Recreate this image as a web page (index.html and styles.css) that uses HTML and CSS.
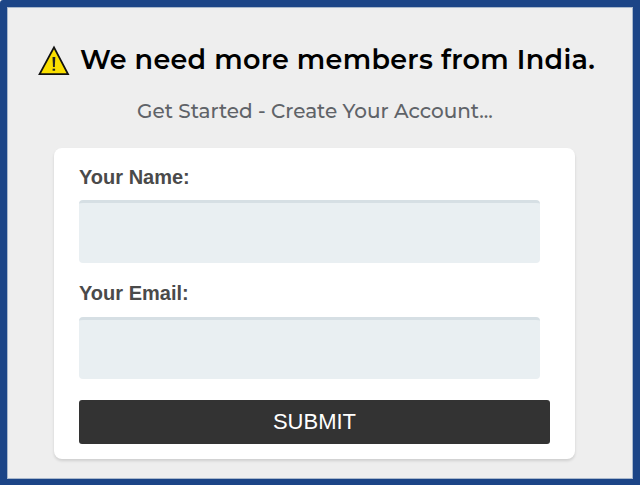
FILE: index.html
```html
<!DOCTYPE html>
<html lang="en">
<head>
  <meta charset="UTF-8" />
  <meta name="viewport" content="width=device-width, initial-scale=1" />
  <title>Create Your Account</title>
  <link rel="stylesheet" href="styles.css">
</head>
<body>

<main class="signup">
  <header class="signup-title">
    <svg class="warning-icon" viewBox="0 0 32 31" aria-hidden="true">
      <path d="M16 2.3 L30 29.1 H1.6 Z" fill="#fadf00" stroke="#111" stroke-width="1.8" />
      <path d="M14.5 12 H17.3 L16.8 22 H15 Z" fill="#222" />
      <rect x="14.6" y="23.7" width="2.5" height="2" fill="#222" />
    </svg>
    <h1>We need more members from India.</h1>
  </header>
  <p class="subtitle">Get Started - Create Your Account...</p>

  <form class="signup-form" autocomplete="off">
    <label for="name">Your Name:</label>
    <input type="text" id="name" name="name" required />

    <label for="email">Your Email:</label>
    <input type="email" id="email" name="email" required />

    <button type="submit">SUBMIT</button>
  </form>
</main>

</body>
</html>
```

FILE: styles.css
```css
body {
  margin: 0;
  background: #fff;
  font-family: Arial, "Liberation Sans", sans-serif;
}
.signup {
  box-sizing: border-box;
  height: 485px;
  padding-top: 36px;
  background: #eee;
  border: solid #1c4587;
  border-width: 7px 7px 6px;
  border-radius: 3px 0 0 0;
  box-shadow: inset 0 0 0 1px #a9b8cc;
  overflow: hidden;
}
.signup-title {
  display: flex;
  align-items: center;
  height: 34px;
  padding-left: 31px;
}
.warning-icon {
  flex: none;
  width: 32px;
  height: 31px;
  margin-right: 10px;
}
h1 {
  margin: 0;
  color: #000;
  font-family: Montserrat, Inter, sans-serif;
  font-size: 27px;
  font-weight: 600;
  line-height: 34px;
  letter-spacing: 0.3px;
  white-space: nowrap;
}
.subtitle {
  margin: 21px 0 0 130px;
  color: #5f6368;
  font-family: Montserrat, Inter, sans-serif;
  font-size: 20px;
  font-weight: 500;
  line-height: 26px;
  letter-spacing: -0.02px;
  white-space: nowrap;
}
.signup-form {
  box-sizing: border-box;
  width: 521px;
  height: 311px;
  margin: 24px 0 0 47px;
  padding: 18px 25px 0;
  background: #fff;
  border-radius: 8px;
  box-shadow: 0 2px 3px rgb(0 0 0 / 0.13);
}
label {
  display: block;
  margin-bottom: 11px;
  color: #4a4a4a;
  font-size: 20px;
  font-weight: bold;
  line-height: 23px;
}
input {
  display: block;
  box-sizing: border-box;
  width: 461px;
  height: 63px;
  margin-bottom: 19px;
  padding: 10px 15px;
  background: #e9eff2;
  border: none;
  border-top: 3px solid #d6dfe4;
  border-radius: 4px;
  font-size: 20px;
}
input:focus {
  outline: none;
  border-color: #9bb0bc;
}
input[type="email"] {
  height: 62px;
  margin: 12px 0 21px;
}
button {
  display: block;
  width: 471px;
  height: 44px;
  padding: 0;
  background: #333;
  border: none;
  border-radius: 3px;
  color: #fff;
  font-family: inherit;
  font-size: 22px;
  cursor: pointer;
}
```
